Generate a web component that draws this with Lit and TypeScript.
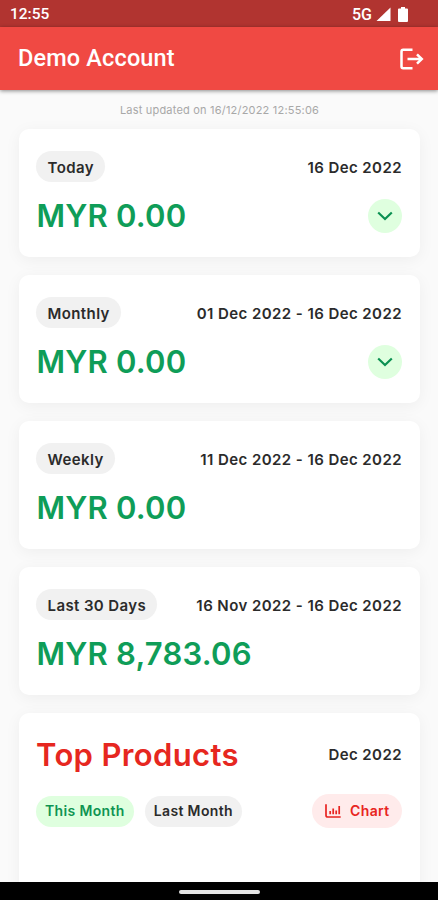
import { LitElement, html, css, nothing } from "lit";
import { customElement, property } from "lit/decorators.js";

interface Period {
  label: string;
  range: string;
  amount: string;
  expandable: boolean;
}

const PERIODS: Period[] = [
  { label: "Today", range: "16 Dec 2022", amount: "MYR 0.00", expandable: true },
  { label: "Monthly", range: "01 Dec 2022 - 16 Dec 2022", amount: "MYR 0.00", expandable: true },
  { label: "Weekly", range: "11 Dec 2022 - 16 Dec 2022", amount: "MYR 0.00", expandable: false },
  { label: "Last 30 Days", range: "16 Nov 2022 - 16 Dec 2022", amount: "MYR 8,783.06", expandable: false },
];

const shared = css`
  * {
    box-sizing: border-box;
  }
  .card {
    background: #fff;
    border-radius: 10px;
    box-shadow: 0 3px 16px rgba(0, 0, 0, 0.05);
    padding: 22px 18px 0 17px;
  }
  .row {
    display: flex;
    align-items: center;
    justify-content: space-between;
  }
  .chip {
    display: flex;
    align-items: center;
    height: 31px;
    padding: 1px 11px 0 11.5px;
    border-radius: 16px;
    background: #f1f1f1;
    white-space: nowrap;
    letter-spacing: 0.4px;
  }
  .date {
    white-space: nowrap;
    letter-spacing: 0.43px;
    padding-top: 1px;
  }
`;

@customElement("status-bar")
export class StatusBar extends LitElement {
  static styles = css`
    :host {
      display: flex;
      box-sizing: border-box;
      align-items: center;
      justify-content: space-between;
      height: 27px;
      padding: 2px 30px 0 10px;
      background: #b13430;
      color: #fff;
      font: 500 15.5px/1 Roboto, sans-serif;
    }
    .icons {
      display: flex;
      align-items: center;
    }
    .network {
      font-size: 16px;
    }
    .signal {
      margin-left: 4px;
    }
    .battery {
      margin-left: 7px;
    }
  `;
  render() {
    return html`
      <span>12:55</span>
      <span class="icons">
        <span class="network">5G</span>
        <svg class="signal" width="15" height="15" viewBox="0 0 15 15"><path d="M14.5 .5V14H.5z" fill="#fff" /></svg>
        <svg class="battery" width="10" height="15" viewBox="0 0 10 15">
          <path d="M3 0h4v1.500h2q1 0 1 1V14q0 1-1 1H1q-1 0-1-1V2.500q0-1 1-1h2z" fill="#fff" />
        </svg>
      </span>
    `;
  }
}

@customElement("app-header")
export class AppHeader extends LitElement {
  static styles = css`
    :host {
      display: flex;
      box-sizing: border-box;
      align-items: center;
      justify-content: space-between;
      height: 63px;
      padding: 0 14px 0 18px;
      background: #f04943;
      color: #fff;
      box-shadow: 0 1px 4px rgba(0, 0, 0, 0.45);
      position: relative;
    }
    .title {
      font: 500 23.5px/1 Roboto, sans-serif;
      letter-spacing: 0.15px;
      padding-top: 1px;
    }
  `;
  render() {
    return html`
      <span class="title">Demo Account</span>
      <svg width="25" height="22" viewBox="0 0 25 22" fill="none" stroke="#fff" stroke-width="2.500">
        <path d="M13.500 1.800H4.200q-1.700 0-1.700 1.700v15q0 1.700 1.700 1.700H13.500" />
        <path d="M8.500 11H22.500" />
        <path d="M18 6.300L22.800 11L18 15.700" />
      </svg>
    `;
  }
}

@customElement("period-card")
export class PeriodCard extends LitElement {
  @property({ attribute: false }) period!: Period;

  static styles = [
    shared,
    css`
      .card {
        height: 128px;
      }
      .total {
        height: 34px;
        margin-top: 17px;
      }
      .amount {
        font-size: 31px;
        line-height: 34px;
        letter-spacing: 0.2px;
        margin-left: 0.5px;
        color: #0f9d58;
      }
      .expand {
        display: flex;
        align-items: center;
        justify-content: center;
        width: 34px;
        height: 34px;
        border-radius: 50%;
        background: #dfffdf;
      }
    `,
  ];

  render() {
    const { label, range, amount, expandable } = this.period;
    return html`
      <div class="card">
        <div class="row">
          <span class="chip">${label}</span>
          <span class="date">${range}</span>
        </div>
        <div class="row total">
          <span class="amount">${amount}</span>
          ${expandable
            ? html`<span class="expand">
                <svg width="16" height="10" viewBox="0 0 16 10" fill="none" stroke="#0b9152" stroke-width="2.200">
                  <path d="M1.200 1.500L8 8L14.800 1.500" />
                </svg>
              </span>`
            : nothing}
        </div>
      </div>
    `;
  }
}

@customElement("top-products")
export class TopProducts extends LitElement {
  static styles = [
    shared,
    css`
      .card {
        height: 200px;
      }
      .heading {
        height: 38px;
      }
      .title {
        font-size: 31px;
        line-height: 38px;
        letter-spacing: 0.35px;
        padding-top: 1px;
        color: #e62720;
      }
      .filters {
        margin-top: 21px;
      }
      .tabs {
        display: flex;
        gap: 11px;
      }
      .tabs .chip {
        padding: 0 9px;
      }
      .filters .chip {
        font-size: 14px;
        letter-spacing: 0.35px;
      }
      .tabs .active {
        background: #dfffdf;
        color: #0f9452;
      }
      .chart {
        height: 34px;
        border-radius: 17px;
        padding: 0 12.5px 0 13px;
        gap: 9px;
        background: #ffebeb;
        color: #e82421;
      }
    `,
  ];
  render() {
    return html`
      <div class="card">
        <div class="row heading">
          <span class="title">Top Products</span>
          <span class="date">Dec 2022</span>
        </div>
        <div class="row filters">
          <div class="tabs">
            <span class="chip active">This Month</span>
            <span class="chip">Last Month</span>
          </div>
          <span class="chip chart">
            <svg width="16" height="14" viewBox="0 0 16 14" fill="none" stroke="#e82421" stroke-width="1.700">
              <path d="M1 .3V11.200q0 1.800 1.800 1.800H15.700M5.200 7V10.300M8.200 4.500V10.300M11.200 6.500V10.300M14.200 2V10.300" />
            </svg>
            Chart
          </span>
        </div>
      </div>
    `;
  }
}

@customElement("app-root")
export class AppRoot extends LitElement {
  static styles = css`
    :host {
      display: flex;
      flex-direction: column;
      height: 900px;
      overflow: hidden;
      background: #fafafa;
      color: #2b2b2b;
      font: 600 15px/1 Inter, sans-serif;
    }
    status-bar,
    app-header,
    .nav {
      flex: none;
    }
    .content {
      flex: 1;
      min-height: 0;
      overflow: hidden;
      padding: 0 18px 0 19px;
    }
    .updated {
      box-sizing: border-box;
      height: 39px;
      padding-top: 15px;
      text-align: center;
      font-size: 11px;
      font-weight: 400;
      letter-spacing: 0.2px;
      color: #a8a8a8;
    }
    .cards {
      display: flex;
      flex-direction: column;
      gap: 18px;
    }
    .nav {
      display: flex;
      box-sizing: border-box;
      align-items: center;
      justify-content: center;
      height: 18px;
      padding-top: 2px;
      background: #000;
    }
    .pill {
      width: 81px;
      height: 4px;
      border-radius: 2px;
      background: #e4e4e4;
    }
  `;
  render() {
    return html`
      <status-bar></status-bar>
      <app-header></app-header>
      <main class="content">
        <div class="updated">Last updated on 16/12/2022 12:55:06</div>
        <div class="cards">
          ${PERIODS.map((p) => html`<period-card .period=${p}></period-card>`)}
          <top-products></top-products>
        </div>
      </main>
      <div class="nav"><span class="pill"></span></div>
    `;
  }
}
